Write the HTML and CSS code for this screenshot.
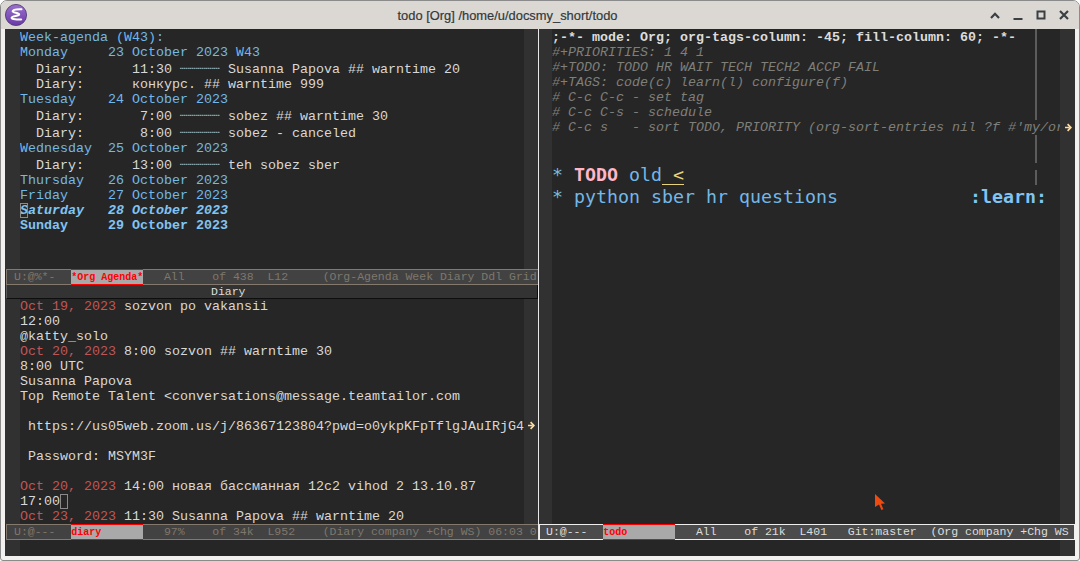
FILE: index.html
```html
<!DOCTYPE html>
<html lang="en">
<head>
<meta charset="utf-8">
<title>todo [Org]</title>
<link rel="stylesheet" href="styles.css">
</head>
<body>
<div class="window">
  <header class="titlebar">
    <svg class="app-icon" width="24" height="24" viewBox="0 0 24 24">
      <defs><linearGradient id="eg" x1="0" y1="0" x2="0" y2="1"><stop offset="0" stop-color="#9a70cf"/><stop offset="1" stop-color="#6a3aa5"/></linearGradient></defs>
      <circle cx="12" cy="12" r="10.6" fill="url(#eg)" stroke="#4a3570" stroke-width="0.8"/>
      <path d="M17.5 6.2C13 6 8.8 6.8 8.6 8.2c-.2 1.6 6.6 1.5 6.6 3.2 0 1.6-7.6 1.5-7.6 3.4 0 1.7 6 1.9 9.6 1.6" fill="none" stroke="#fff" stroke-width="2" stroke-linecap="round"/>
    </svg>
    <div class="title">todo [Org] /home/u/docsmy_short/todo</div>
    <div class="controls">
      <svg width="12" height="12" viewBox="0 0 12 12"><path d="M2 9l4-4.2L10 9" fill="none" stroke="#3a3f44" stroke-width="2.2"/></svg>
      <svg width="12" height="12" viewBox="0 0 12 12"><path d="M1.5 10h9" fill="none" stroke="#3a3f44" stroke-width="2.2"/></svg>
      <svg width="12" height="12" viewBox="0 0 12 12"><rect x="2.5" y="2.5" width="7" height="7" fill="none" stroke="#3a3f44" stroke-width="2"/></svg>
      <svg width="12" height="12" viewBox="0 0 12 12"><path d="M2 2l8 8M10 2l-8 8" fill="none" stroke="#3a3f44" stroke-width="2.2"/></svg>
    </div>
  </header>

  <main class="frame">
    <div class="panes">
      <section class="col-left">
        <div class="pane pane-agenda">
          <div class="buffer">
            <div class="fringe-left"></div>
            <div class="text text-left">
              <div class="line blue">Week-agenda (W43):</div>
              <div class="line blue">Monday     23 October 2023 W43</div>
              <div class="line tall">  Diary:      11:30 <span class="dash">┈┈┈┈┈</span> Susanna Papova ## warntime 20</div>
              <div class="line">  Diary:      конкурс. ## warntime 999</div>
              <div class="line blue">Tuesday    24 October 2023</div>
              <div class="line tall">  Diary:       7:00 <span class="dash">┈┈┈┈┈</span> sobez ## warntime 30</div>
              <div class="line tall">  Diary:       8:00 <span class="dash">┈┈┈┈┈</span> sobez - canceled</div>
              <div class="line blue">Wednesday  25 October 2023</div>
              <div class="line tall">  Diary:      13:00 <span class="dash">┈┈┈┈┈</span> teh sobez sber</div>
              <div class="line blue">Thursday   26 October 2023</div>
              <div class="line blue">Friday     27 October 2023</div>
              <div class="line blue-bold ital"><span class="cursor">S</span>aturday   28 October 2023</div>
              <div class="line blue-bold">Sunday     29 October 2023</div>
            </div>
            <div class="fringe-right"></div>
          </div>
          <div class="modeline inactive">U:@%*-  <span class="bufname">*Org Agenda*</span>   All    of 438  L12     (Org-Agenda Week Diary Ddl Grid</div>
        </div>
        <div class="pane pane-diary">
          <div class="headerline">Diary</div>
          <div class="buffer">
            <div class="fringe-left"></div>
            <div class="text text-left">
              <div class="line"><span class="red">Oct 19, 2023</span> sozvon po vakansii</div>
              <div class="line">12:00</div>
              <div class="line">@katty_solo</div>
              <div class="line"><span class="red">Oct 20, 2023</span> 8:00 sozvon ## warntime 30</div>
              <div class="line">8:00 UTC</div>
              <div class="line">Susanna Papova</div>
              <div class="line">Top Remote Talent &lt;conversations@message.teamtailor.com</div>
              <div class="line"> </div>
              <div class="line"> https://us05web.zoom.us/j/86367123804?pwd=o0ykpKFpTflgJAuIRjG4</div>
              <div class="line"> </div>
              <div class="line"> Password: MSYM3F</div>
              <div class="line"> </div>
              <div class="line"><span class="red">Oct 20, 2023</span> 14:00 новая бассманная 12c2 vihod 2 13.10.87</div>
              <div class="line">17:00<span class="cursor"> </span></div>
              <div class="line"><span class="red">Oct 23, 2023</span> 11:30 Susanna Papova ## warntime 20</div>
            </div>
            <div class="fringe-right">
              <svg class="trunc trunc-diary" width="7" height="9" viewBox="0 0 7 9"><path d="M0 4.5h4.5M2.6 1.2l3.3 3.3-3.3 3.3" fill="none" stroke="#ffdca0" stroke-width="1.7"/></svg>
            </div>
          </div>
          <div class="modeline inactive">U:@---  <span class="bufname">diary</span>   97%    of 34k  L952    (Diary company +Chg WS) 06:03 0</div>
        </div>
      </section>

      <section class="col-right">
        <div class="buffer">
          <div class="fringe-left narrow"></div>
          <div class="text text-right">
            <div class="fill-col">
              <span class="seg seg-a"></span>
              <span class="seg seg-b"></span>
              <span class="seg seg-c"></span>
            </div>
            <div class="line bold">;-*- mode: Org; org-tags-column: -45; fill-column: 60; -*-</div>
            <div class="line comment">#+PRIORITIES: 1 4 1</div>
            <div class="line comment">#+TODO: TODO HR WAIT TECH TECH2 ACCP FAIL</div>
            <div class="line comment">#+TAGS: code(c) learn(l) configure(f)</div>
            <div class="line comment"># C-c C-c - set tag</div>
            <div class="line comment"># C-c C-s - schedule</div>
            <div class="line comment"># C-c s   - sort TODO, PRIORITY (org-sort-entries nil ?f #'my/or</div>
            <div class="headings">
              <div class="heading"><span class="star">* </span><span class="todo">TODO</span> old<span class="lt"> &lt;</span></div>
              <div class="heading heading-row"><span><span class="star">* </span>python sber hr questions</span><span class="tag">:learn:</span></div>
            </div>
          </div>
          <div class="fringe-right wide">
            <svg class="trunc trunc-org" width="7" height="9" viewBox="0 0 7 9"><path d="M0 4.5h4.5M2.6 1.2l3.3 3.3-3.3 3.3" fill="none" stroke="#ffdca0" stroke-width="1.7"/></svg>
          </div>
          <svg class="pointer" width="11" height="16" viewBox="0 0 11 16"><path d="M0 0l10 9.5-4 .3 2.4 5.4-2 .8L4 10.6 0 13z" fill="#f04a10"/></svg>
        </div>
        <div class="modeline active">U:@---  <span class="bufname">todo</span>   All    of 21k  L401   Git:master  (Org company +Chg WS</div>
      </section>
    </div>
    <div class="minibuffer">
      <div class="fringe-left"></div>
      <div class="mini-fill"></div>
      <div class="fringe-right wide"></div>
    </div>
  </main>
</div>
</body>
</html>
```
FILE: styles.css
```css
* { box-sizing: border-box; }
html, body { margin: 0; padding: 0; }
body { width: 1080px; height: 561px; overflow: hidden; background: #fff; }

.window {
  width: 1080px;
  height: 561px;
  background: #f2f1ef;
  border: 1px solid #8b8b8b;
  border-radius: 7px 7px 3px 3px;
  padding: 0 4px 4px;
  display: flex;
  flex-direction: column;
  overflow: hidden;
}

.titlebar {
  height: 28px;
  margin: 0 -4px;
  padding: 0 9px 0 3px;
  background: #dbd8d4;
  display: flex;
  align-items: center;
  flex: none;
}
.app-icon { flex: none; }
.title {
  flex: 1;
  text-align: center;
  padding-right: 2px;
  font: 12.9px "Liberation Sans", sans-serif;
  color: #33383a;
  -webkit-text-stroke: 0.2px #33383a;
}
.controls { display: flex; gap: 11px; align-items: center; }

.frame {
  flex: 1;
  width: 1070px;
  display: flex;
  flex-direction: column;
  background: #262626;
  font: 13.333px/15px "Liberation Mono", monospace;
  color: #d8d8d8;
}
.panes { display: flex; height: 511px; flex: none; }

.col-left { width: 533px; display: flex; flex-direction: column; flex: none; }
.col-right { flex: 1; min-width: 0; display: flex; flex-direction: column; border-left: 1px solid #e8e8e8; overflow: hidden; }

.pane { display: flex; flex-direction: column; overflow: hidden; flex: none; }
.pane-agenda { height: 256px; }
.pane-diary { height: 255px; }

.buffer { flex: 1; min-height: 0; display: flex; position: relative; }
.fringe-left { width: 15px; background: #313131; flex: none; }
.fringe-left.narrow { width: 13px; }
.fringe-right { width: 14px; background: #313131; flex: none; position: relative; }
.fringe-right.wide { width: 15px; }
.text { flex: 1; min-width: 0; overflow: hidden; padding-top: 1px; position: relative; }
.pane-diary .text { padding-top: 0; }

.line { height: 15px; white-space: pre; }
.line.tall { height: 17px; padding-top: 2px; }
.blue { color: #72b8e8; }
.blue-bold { color: #80c4f4; font-weight: bold; }
.ital { font-style: italic; }
.red { color: #c05555; }
.bold { font-weight: bold; color: #dcdcdc; }
.comment { color: #7f7f7a; font-style: italic; }
.dash { color: #b4b4b4; }
.cursor { display: inline-block; width: 8px; height: 15px; outline: 1px solid #8a8a8a; outline-offset: -1px; vertical-align: top; }

.headerline {
  height: 14px;
  flex: none;
  margin-left: 1px;
  padding-left: 204px;
  background: #333;
  border-left: 1px solid #5d5d5d;
  border-right: 1px solid #0e0e0e;
  border-bottom: 1px solid #0e0e0e;
  font-size: 11.5px;
  line-height: 13px;
  color: #dcdcdc;
  white-space: pre;
}

.modeline {
  height: 16px;
  flex: none;
  white-space: pre;
  font-size: 11.5px;
  line-height: 14px;
  padding-left: 7px;
}
.modeline.inactive { margin-left: 1px; background: #424242; border: 1px solid #83796c; border-width: 1px 0 1px 1px; color: #7f776c; }
.modeline.active { background: #4b4b4b; border: 1px solid #efefef; color: #dedede; padding-left: 6px; }
.bufname {
  display: inline-block;
  width: 72px;
  height: 16px;
  margin: -1px 0 -1px 2px;
  vertical-align: top;
  background: #a9a9a9;
  border-top: 1px solid #ff0000;
  border-bottom: 1px solid #ff0000;
  color: #ff0000;
  font-size: 10px;
  font-weight: bold;
  line-height: 15px;
}

.trunc { position: absolute; left: 4px; }
.trunc-diary { top: 122px; }
.trunc-org { top: 94px; left: 5px; }

.fill-col { position: absolute; left: 483px; top: 0; width: 2px; height: 156px; }
.seg { position: absolute; left: 0; width: 2px; background: #5c5c5c; display: block; }
.seg-a { top: 0; height: 91px; }
.seg-b { top: 106px; height: 28px; }
.seg-c { top: 141px; height: 15px; }

.headings { margin-top: 29px; font: 18.27px/22px "DejaVu Sans Mono", monospace; color: #72b8e8; }
.heading { height: 22px; white-space: pre; }
.heading-row { display: flex; justify-content: space-between; padding-right: 13px; }
.star { color: #78bcd8; }
.todo { color: #ffb6c8; font-weight: bold; }
.lt { color: #e8d27a; text-decoration: underline; text-underline-offset: 3px; }
.tag { color: #80c4f4; font-weight: bold; }

.pointer { position: absolute; left: 336px; top: 465px; }

.minibuffer { flex: 1; display: flex; }
.mini-fill { flex: 1; }
```
